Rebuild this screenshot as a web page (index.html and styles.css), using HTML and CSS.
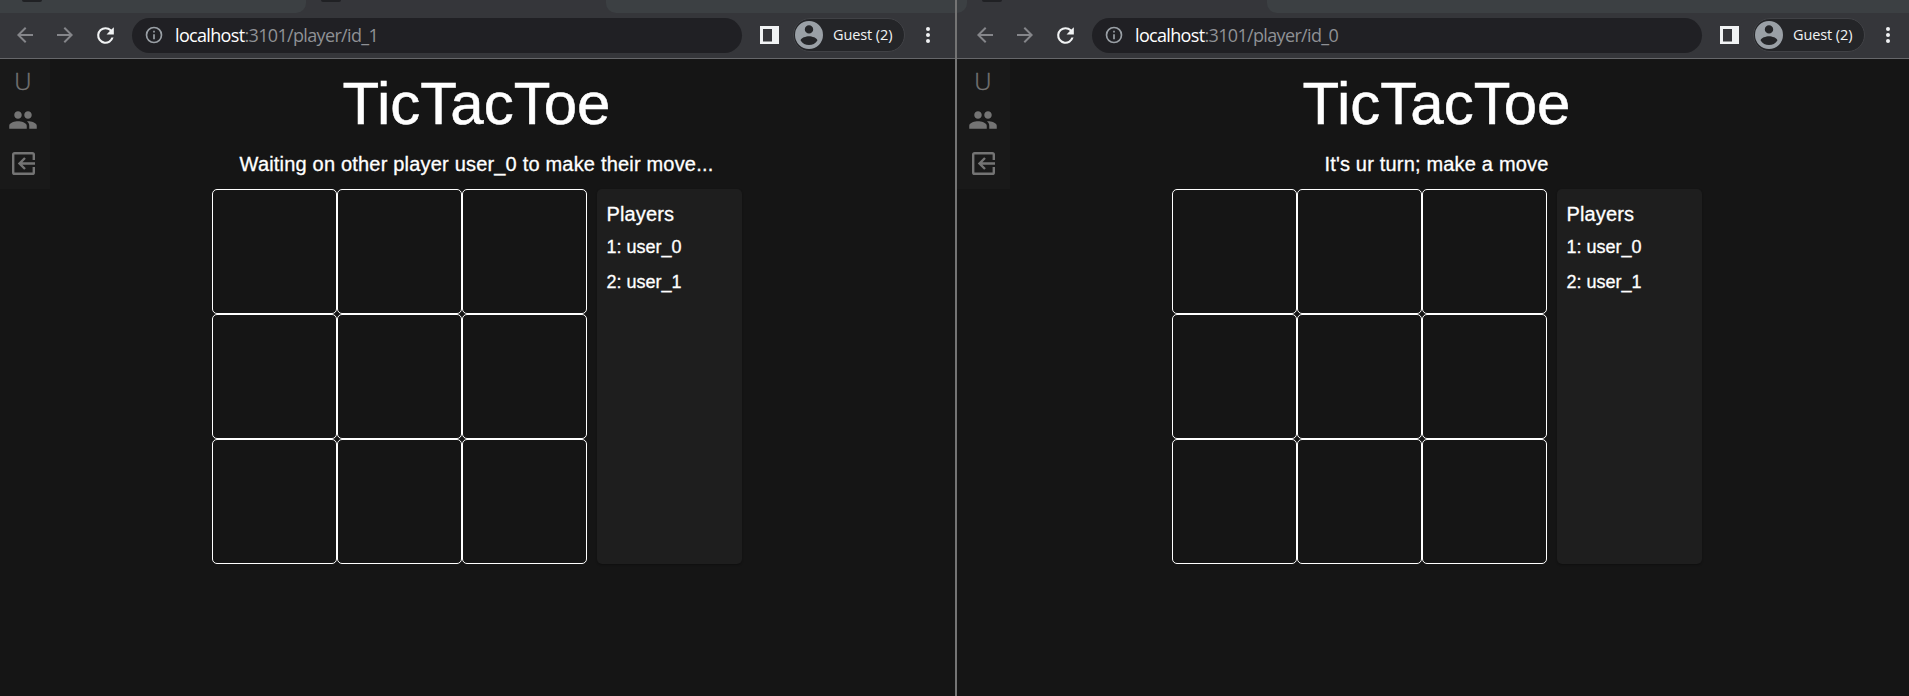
FILE: index.html
```
<!DOCTYPE html>
<html lang="en">
<head>
<meta charset="utf-8">
<title>TicTacToe</title>
<link rel="stylesheet" href="styles.css">
</head>
<body>
<svg class="defs" aria-hidden="true">
  <symbol id="back" viewBox="0 0 24 24"><path d="M20 11H7.83l5.59-5.59L12 4l-8 8 8 8 1.41-1.41L7.83 13H20z"/></symbol>
  <symbol id="forward" viewBox="0 0 24 24"><path d="M12 4l-1.41 1.41L16.17 11H4v2h12.17l-5.58 5.59L12 20l8-8z"/></symbol>
  <symbol id="reload" viewBox="0 0 24 24"><path d="M17.65 6.35A7.96 7.96 0 0 0 12 4a8 8 0 1 0 7.73 10h-2.08A6 6 0 1 1 12 6c1.66 0 3.14.69 4.22 1.78L13 11h7V4z"/></symbol>
  <symbol id="info" viewBox="0 0 24 24"><path d="M11 7h2v2h-2zm0 4h2v6h-2zm1-9a10 10 0 1 0 0 20 10 10 0 0 0 0-20zm0 18a8 8 0 1 1 0-16 8 8 0 0 1 0 16z"/></symbol>
  <symbol id="side" viewBox="0 0 19 18"><path fill-rule="evenodd" d="M0 0h19v18H0zM3 3v12.5h9V3z"/></symbol>
  <symbol id="avatar" viewBox="2 2 20 20"><path d="M12 2a10 10 0 1 0 0 20 10 10 0 0 0 0-20zm0 3a3 3 0 1 1 0 6 3 3 0 0 1 0-6zm0 14.2a7.2 7.2 0 0 1-6-3.22c.03-1.99 4-3.08 6-3.08s5.97 1.09 6 3.08a7.2 7.2 0 0 1-6 3.22z"/></symbol>
  <symbol id="group" viewBox="0 0 24 24"><path d="M16 11c1.66 0 2.99-1.34 2.99-3S17.66 5 16 5s-3 1.34-3 3 1.34 3 3 3zm-8 0c1.66 0 2.99-1.34 2.99-3S9.66 5 8 5 5 6.34 5 8s1.34 3 3 3zm0 2c-2.33 0-7 1.17-7 3.5V19h14v-2.5c0-2.33-4.67-3.5-7-3.5zm8 0c-.29 0-.62.02-.97.05 1.16.84 1.97 1.97 1.97 3.45V19h6v-2.5c0-2.33-4.67-3.5-7-3.5z"/></symbol>
  <symbol id="leave" viewBox="0 0 23 23"><path fill="none" stroke="currentColor" stroke-width="2.4" d="M21.8 8V2.6Q21.8 1.2 20.4 1.2H2.6Q1.2 1.2 1.2 2.6v17.8q0 1.4 1.4 1.4h17.8q1.4 0 1.4-1.4V15M23 11.5H8M13 6l-5.5 5.5L13 17"/></symbol>
</svg>

<main class="desktop">
  <section class="window window-left">
    <div class="tabs">
      <div class="tab tab-before"><i class="favicon"></i></div>
      <div class="tab tab-active"><i class="favicon"></i></div>
      <div class="tab tab-after"></div>
    </div>
    <div class="toolbar">
      <svg class="nav dim"><use href="#back"/></svg>
      <svg class="nav dim"><use href="#forward"/></svg>
      <svg class="nav reload"><use href="#reload"/></svg>
      <div class="address"><svg class="info"><use href="#info"/></svg><span class="url"><b>localhost</b>:3101/player/id_1</span></div>
      <svg class="side"><use href="#side"/></svg>
      <div class="profile"><svg class="avatar"><use href="#avatar"/></svg><span class="guest">Guest (2)</span></div>
      <div class="menu"><i></i><i></i><i></i></div>
    </div>
    <div class="page">
      <nav class="sidebar"><span class="letter">U</span><svg class="group"><use href="#group"/></svg><svg class="leave"><use href="#leave"/></svg></nav>
      <div class="game">
        <h1 class="title">TicTacToe</h1>
        <p class="status">Waiting on other player user_0 to make their move...</p>
        <div class="row">
          <div class="board"><i></i><i></i><i></i><i></i><i></i><i></i><i></i><i></i><i></i></div>
          <aside class="players"><h2>Players</h2><p>1: user_0</p><p>2: user_1</p></aside>
        </div>
      </div>
    </div>
  </section>
  <section class="window window-right">
    <div class="tabs">
      <div class="tab tab-before"></div>
      <div class="tab tab-active"><i class="favicon"></i></div>
      <div class="tab tab-after"></div>
    </div>
    <div class="toolbar">
      <svg class="nav dim"><use href="#back"/></svg>
      <svg class="nav dim"><use href="#forward"/></svg>
      <svg class="nav reload"><use href="#reload"/></svg>
      <div class="address"><svg class="info"><use href="#info"/></svg><span class="url"><b>localhost</b>:3101/player/id_0</span></div>
      <svg class="side"><use href="#side"/></svg>
      <div class="profile"><svg class="avatar"><use href="#avatar"/></svg><span class="guest">Guest (2)</span></div>
      <div class="menu"><i></i><i></i><i></i></div>
    </div>
    <div class="page">
      <nav class="sidebar"><span class="letter">U</span><svg class="group"><use href="#group"/></svg><svg class="leave"><use href="#leave"/></svg></nav>
      <div class="game">
        <h1 class="title">TicTacToe</h1>
        <p class="status">It's ur turn; make a move</p>
        <div class="row">
          <div class="board"><i></i><i></i><i></i><i></i><i></i><i></i><i></i><i></i><i></i></div>
          <aside class="players"><h2>Players</h2><p>1: user_0</p><p>2: user_1</p></aside>
        </div>
      </div>
    </div>
  </section>
</main>
</body>
</html>
```
FILE: styles.css
```
* { box-sizing: border-box; }
body { margin: 0; background: #151515; color: #fff; font-family: "Liberation Sans", Arial, sans-serif; overflow: hidden; }
h1, h2, p { margin: 0; font-weight: 400; }
svg { display: block; fill: currentColor; flex: none; }
.defs { display: none; }

.desktop { display: flex; width: 1909px; height: 696px; overflow: hidden; }
.window { display: flex; flex-direction: column; height: 696px; --inset: 0px; }
.window-left { width: 955px; flex: none; }
.window-right { width: 954px; flex: none; border-left: 2px solid #747474; --inset: 3px; }

.tabs { display: flex; height: 13px; background: #35363a; }
.tab { height: 13px; flex: none; }
.tab-before { width: 306px; padding-left: 22px; background: #3c4043; border-bottom-right-radius: 10px; }
.tab-active { width: 300px; padding-left: 15px; }
.tab-after { flex: 1; background: #3c4043; border-bottom-left-radius: 10px; }
.window-right .tab-before { width: 10px; padding: 0; }
.favicon { display: block; width: 20px; height: 2px; background: #202124; border-radius: 0 0 2px 2px; }

.toolbar { display: flex; align-items: center; height: 46px; padding: 0 0 1px calc(12.5px + var(--inset)); background: #35363a; border-bottom: 1px solid #66676a; color: #f1f3f4; }
.nav { width: 24px; height: 24px; margin-right: 16px; }
.reload { width: 25px; height: 25px; margin-right: 14.5px; }
.dim { color: #85868a; }
.address { display: flex; align-items: center; width: 610px; height: 35px; flex: none; border-radius: 18px; background: #202024; padding-left: 12px; }
.info { width: 20px; height: 20px; color: #9aa0a6; }
.url { margin-left: 11px; font: 18px/35px "Open Sans", "Noto Sans", sans-serif; letter-spacing: -0.66px; color: #8f9195; white-space: nowrap; }
.url b { font-weight: 400; color: #fff; }
.side { width: 19px; height: 18px; margin-left: 18px; }
.profile { display: flex; align-items: center; width: 112px; height: 34px; flex: none; margin-left: 14px; padding-left: 1px; border: 1px solid #414246; border-radius: 17px; background: #242528; }
.avatar { width: 28px; height: 28px; color: #9aa0a6; }
.guest { margin-left: 10px; font: 14.5px/32px "Open Sans", "Noto Sans", sans-serif; letter-spacing: -0.1px; white-space: nowrap; }
.menu { display: flex; flex-direction: column; gap: 2px; margin-left: 21px; }
.menu i { width: 4px; height: 4px; border-radius: 50%; background: currentColor; }

.page { display: flex; flex: 1; align-items: flex-start; }
.sidebar { display: flex; flex-direction: column; align-items: center; width: calc(50px + var(--inset)); height: 130px; flex: none; padding: 6px 4px 0 var(--inset); background: #191919; color: #747474; }
.letter { height: 32px; font: 300 24px/32px "Open Sans", "Noto Sans", sans-serif; -webkit-text-stroke: 0.4px currentColor; }
.group { width: 30px; height: 30px; margin-top: 8px; }
.leave { width: 23px; height: 23px; margin-top: 17px; }
.game { width: 853px; padding-top: 9px; }
.title { font-size: 60px; line-height: 72px; letter-spacing: 0; text-align: center; -webkit-text-stroke: 0.5px currentColor; }
.status { margin-top: 8px; font-size: 20px; line-height: 32px; letter-spacing: 0.19px; text-align: center; -webkit-text-stroke: 0.3px currentColor; }
.row { display: flex; justify-content: center; gap: 10px; margin-top: 9px; }
.board { display: grid; grid-template: repeat(3, 125px) / repeat(3, 125px); }
.board i { border: 1px solid #fff; border-radius: 5px; }
.players { width: 145px; padding: 9px 10px; border-radius: 5px; background: #1e1e1e; box-shadow: 0 1px 2px rgba(0, 0, 0, 0.3); -webkit-text-stroke: 0.3px currentColor; }
.players h2 { font-size: 20px; line-height: 32px; letter-spacing: 0.15px; }
.players p { font-size: 18px; line-height: 35px; }
```
